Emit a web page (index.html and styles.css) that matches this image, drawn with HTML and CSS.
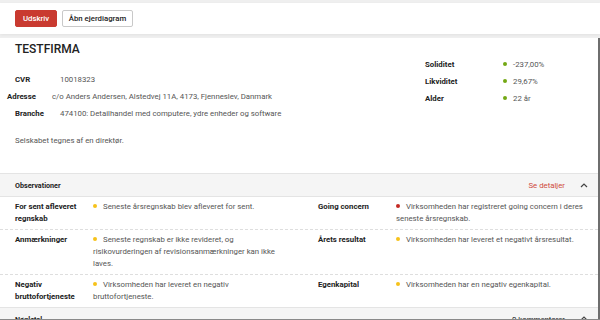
FILE: index.html
```html
<!DOCTYPE html>
<html lang="da">
<head>
<meta charset="utf-8">
<title>TESTFIRMA</title>
<link rel="stylesheet" href="styles.css">
</head>
<body>
<div class="page">
  <div class="toolbar">
    <button class="btn btn-primary">Udskriv</button>
    <button class="btn btn-outline">Åbn ejerdiagram</button>
  </div>
  <div class="card">
    <div class="info">
      <div class="info-left">
        <h1 class="title">TESTFIRMA</h1>
        <div class="facts">
          <div class="fact"><span class="fact-key">CVR</span><span class="fact-val">10018323</span></div>
          <div class="fact fact-shift"><span class="fact-key">Adresse</span><span class="fact-val">c/o Anders Andersen, Alstedvej 11A, 4173, Fjenneslev, Danmark</span></div>
          <div class="fact"><span class="fact-key">Branche</span><span class="fact-val">474100: Detailhandel med computere, ydre enheder og software</span></div>
        </div>
        <p class="sign">Selskabet tegnes af en direktør.</p>
      </div>
      <div class="info-right">
        <div class="kf"><span class="kf-key">Soliditet</span><span class="dot dot-green"></span><span class="kf-val">-237,00%</span></div>
        <div class="kf"><span class="kf-key">Likviditet</span><span class="dot dot-green"></span><span class="kf-val">29,67%</span></div>
        <div class="kf"><span class="kf-key">Alder</span><span class="dot dot-green"></span><span class="kf-val">22 år</span></div>
      </div>
    </div>

    <div class="section-head">
      <span class="section-title">Observationer</span>
      <span class="section-link">Se detaljer</span>
      <svg class="chev" width="8" height="6" viewBox="0 0 8 6"><path d="M1 5 L4 2 L7 5" fill="none" stroke="#444" stroke-width="1.2"/></svg>
    </div>

    <div class="obs">
      <div class="obs-row">
        <div class="obs-key">For sent afleveret regnskab</div>
        <div class="obs-text"><span class="dot dot-yellow"></span>Seneste årsregnskab blev afleveret for sent.</div>
        <div class="obs-key">Going concern</div>
        <div class="obs-text"><span class="dot dot-red"></span>Virksomheden har registreret going concern i deres seneste årsregnskab.</div>
      </div>
      <div class="obs-row">
        <div class="obs-key">Anmærkninger</div>
        <div class="obs-text"><span class="dot dot-yellow"></span>Seneste regnskab er ikke revideret, og risikovurderingen af revisionsanmærkninger kan ikke laves.</div>
        <div class="obs-key">Årets resultat</div>
        <div class="obs-text"><span class="dot dot-yellow"></span>Virksomheden har leveret et negativt årsresultat.</div>
      </div>
      <div class="obs-row">
        <div class="obs-key">Negativ bruttofortjeneste</div>
        <div class="obs-text"><span class="dot dot-yellow"></span>Virksomheden har leveret en negativ bruttofortjeneste.</div>
        <div class="obs-key">Egenkapital</div>
        <div class="obs-text"><span class="dot dot-yellow"></span>Virksomheden har en negativ egenkapital.</div>
      </div>
    </div>

    <div class="section-head section-next">
      <span class="section-title">Nøgletal</span>
      <span class="section-count">0 kommentarer</span>
      <svg class="chev" width="8" height="6" viewBox="0 0 8 6"><path d="M1 5 L4 2 L7 5" fill="none" stroke="#444" stroke-width="1.2"/></svg>
    </div>
  </div>
</div>
</body>
</html>
```

FILE: styles.css
```css
* { box-sizing: border-box; }
html, body { margin: 0; padding: 0; }
body {
  background: #efefef;
  font-family: Roboto, "Liberation Sans", sans-serif;
  font-size: 7.8px;
  color: #555;
}
.page {
  width: 600px;
  height: 320px;
  overflow: hidden;
  padding-top: 3px;
  border-bottom: 1px solid #8a8a8a;
}
.toolbar {
  height: 31px;
  background: #fff;
  display: flex;
  align-items: center;
  gap: 5px;
  padding: 0 15px;
  box-shadow: 0 1px 3px rgba(0,0,0,0.06);
}
.btn {
  height: 17px;
  font-family: inherit;
  font-size: 7.8px;
  font-weight: 500;
  border-radius: 2px;
  padding: 0;
  white-space: nowrap;
  cursor: pointer;
}
.btn-primary {
  background: #c93a30;
  color: #fff;
  border: 1px solid #c93a30;
  width: 42px;
}
.btn-outline {
  background: #fff;
  color: #222;
  border: 1px solid #c9c9c9;
  width: 71px;
}
.card {
  margin-top: 4px;
  background: #fff;
  border-right: 2px solid #6e6e6e;
  height: 282px;
}
.info {
  display: flex;
  justify-content: space-between;
  padding: 4px 0 0 15px;
  height: 135px;
}
.title {
  margin: 0;
  font-size: 12px;
  line-height: 14px;
  font-weight: 500;
  color: #222;
}
.facts {
  margin-top: 14.5px;
}
.fact {
  display: flex;
  height: 17px;
  align-items: center;
}
.fact-key {
  width: 45px;
  font-weight: 700;
  color: #222;
}
.fact-shift { margin-left: -8px; }
.fact-val { color: #555; }
.sign {
  margin: 13.5px 0 0;
  line-height: 12px;
  color: #555;
}
.info-right {
  padding-top: 13.5px;
  width: 173px;
}
.kf {
  display: flex;
  align-items: center;
  height: 17px;
}
.kf-key {
  width: 78px;
  font-weight: 700;
  color: #222;
}
.kf-val { color: #555; margin-left: 6px; }
.dot {
  display: inline-block;
  width: 4px;
  height: 4px;
  border-radius: 50%;
  vertical-align: 1px;
}
.dot-green { background: #73a814; }
.dot-yellow { background: #f6c21a; margin-right: 6px; }
.dot-red { background: #c42a24; margin-right: 6px; }
.section-head {
  height: 24px;
  background: #f5f5f5;
  border-top: 1px solid #e4e4e4;
  border-bottom: 1px solid #e4e4e4;
  display: flex;
  align-items: center;
  padding: 0 10px 0 15px;
}
.section-title {
  font-size: 7.2px;
  font-weight: 700;
  color: #222;
  flex: 1;
}
.section-link {
  color: #cf4a3c;
  font-size: 7.8px;
  margin-right: 15px;
}
.section-count {
  color: #222;
  font-size: 7.8px;
  margin-right: 15px;
}
.chev { display: block; }
.obs-row {
  display: grid;
  grid-template-columns: 78px 225px 78px 1fr;
  padding: 4px 15px 4px 15px;
  line-height: 12px;
  border-bottom: 1px dashed #dedede;
}
.obs-row:last-child { border-bottom: none; }
.obs-key {
  font-weight: 700;
  color: #222;
  padding-right: 4px;
}
.obs-text {
  color: #555;
}
.obs-row .obs-text:nth-child(2) { padding-right: 36px; }
.section-next {
  border-bottom: none;
  align-items: flex-start;
  padding-top: 7px;
}
```
